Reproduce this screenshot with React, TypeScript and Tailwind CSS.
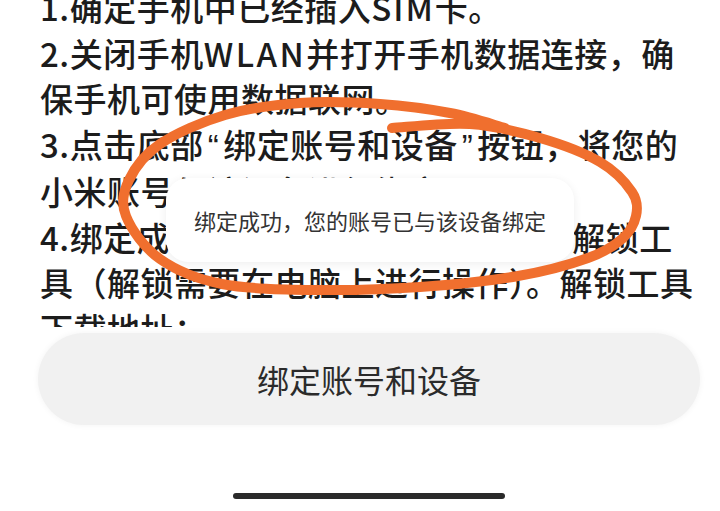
import React from "react";

const Q = ({ c }: { c: string }) => (
  <span className="mx-[4px]" style={{ fontFamily: '"Liberation Sans", sans-serif' }}>
    {c}
  </span>
);

const lines: React.ReactNode[] = [
  <>
    1.确定手机中已经插入<span className="tracking-[2px]">SIM</span>卡。
  </>,
  <>
    2.关闭手机<span className="tracking-[2.5px]">WLAN</span>并打开手机数据连接，确
  </>,
  "保手机可使用数据联网。",
  <>
    3.点击底部<Q c="“" />绑定账号和设备<Q c="”" />按钮，将您的
  </>,
  "小米账号与该设备进行绑定。",
  "4.绑定成功后，请在官网下载刷机、解锁工",
  "具（解锁需要在电脑上进行操作）。解锁工具",
  "下载地址：",
];

// hand-drawn circle around the toast
const circlePoints: [number, number][] = [
  [392, 128],
  [470, 124],
  [540, 138],
  [600, 162],
  [632, 192],
  [636, 216],
  [622, 239],
  [588, 258],
  [518, 276],
  [420, 287],
  [320, 290],
  [222, 284],
  [160, 259],
  [126, 216],
  [129, 180],
  [160, 144],
  [225, 115],
  [300, 103],
  [380, 104],
  [450, 113],
  [505, 128],
];

const smoothPath = (pts: [number, number][]) => {
  let d = `M${pts[0][0]},${pts[0][1]}`;
  for (let i = 0; i < pts.length - 1; i++) {
    const p0 = pts[i - 1] || pts[i];
    const p1 = pts[i];
    const p2 = pts[i + 1];
    const p3 = pts[i + 2] || p2;
    const c1x = p1[0] + (p2[0] - p0[0]) / 6;
    const c1y = p1[1] + (p2[1] - p0[1]) / 6;
    const c2x = p2[0] - (p3[0] - p1[0]) / 6;
    const c2y = p2[1] - (p3[1] - p1[1]) / 6;
    d += ` C${c1x.toFixed(1)},${c1y.toFixed(1)} ${c2x.toFixed(1)},${c2y.toFixed(1)} ${p2[0]},${p2[1]}`;
  }
  return d;
};

const Toast = () => (
  <div className="absolute left-[166px] top-[178px] z-10 w-[408px] h-[84px] rounded-[22px] bg-white shadow-[0_2px_10px_rgba(0,0,0,0.07)] flex items-center justify-center">
    <p className="text-[22px] text-[#333]">绑定成功，您的账号已与该设备绑定</p>
  </div>
);

export default function App() {
  return (
    <div
      className="relative w-[720px] h-[511px] overflow-hidden bg-white"
      style={{ fontFamily: '"Noto Sans CJK SC", "Noto Sans", sans-serif' }}
    >
      <div className="h-[327px] overflow-hidden">
        <div className="pl-[40px] mt-[-15px] text-[33px] tracking-[0.5px] leading-[45.5px] font-medium text-[#1c1c1c]">
          {lines.map((l, i) => (
            <div key={i} className="whitespace-nowrap">
              {l}
            </div>
          ))}
        </div>
      </div>

      <div className="flex flex-col">
        <button className="mt-[6px] ml-[38px] mr-[20px] h-[92px] rounded-full bg-[#f1f1f1] shadow-[0_0_6px_rgba(0,0,0,0.05)] flex items-center justify-center text-[32px] text-[#2b2b2b]">
          绑定账号和设备
        </button>
        <div className="mt-[68px] ml-[233px] w-[272px] h-[6px] rounded-full bg-[#2a2a2a]" />
      </div>

      <Toast />

      <svg className="absolute inset-0 z-20 pointer-events-none" width="720" height="511" viewBox="0 0 720 511">
        <path
          d={smoothPath(circlePoints)}
          fill="none"
          stroke="#f06f2e"
          strokeWidth="10"
          strokeLinecap="round"
          strokeLinejoin="round"
        />
      </svg>
    </div>
  );
}
